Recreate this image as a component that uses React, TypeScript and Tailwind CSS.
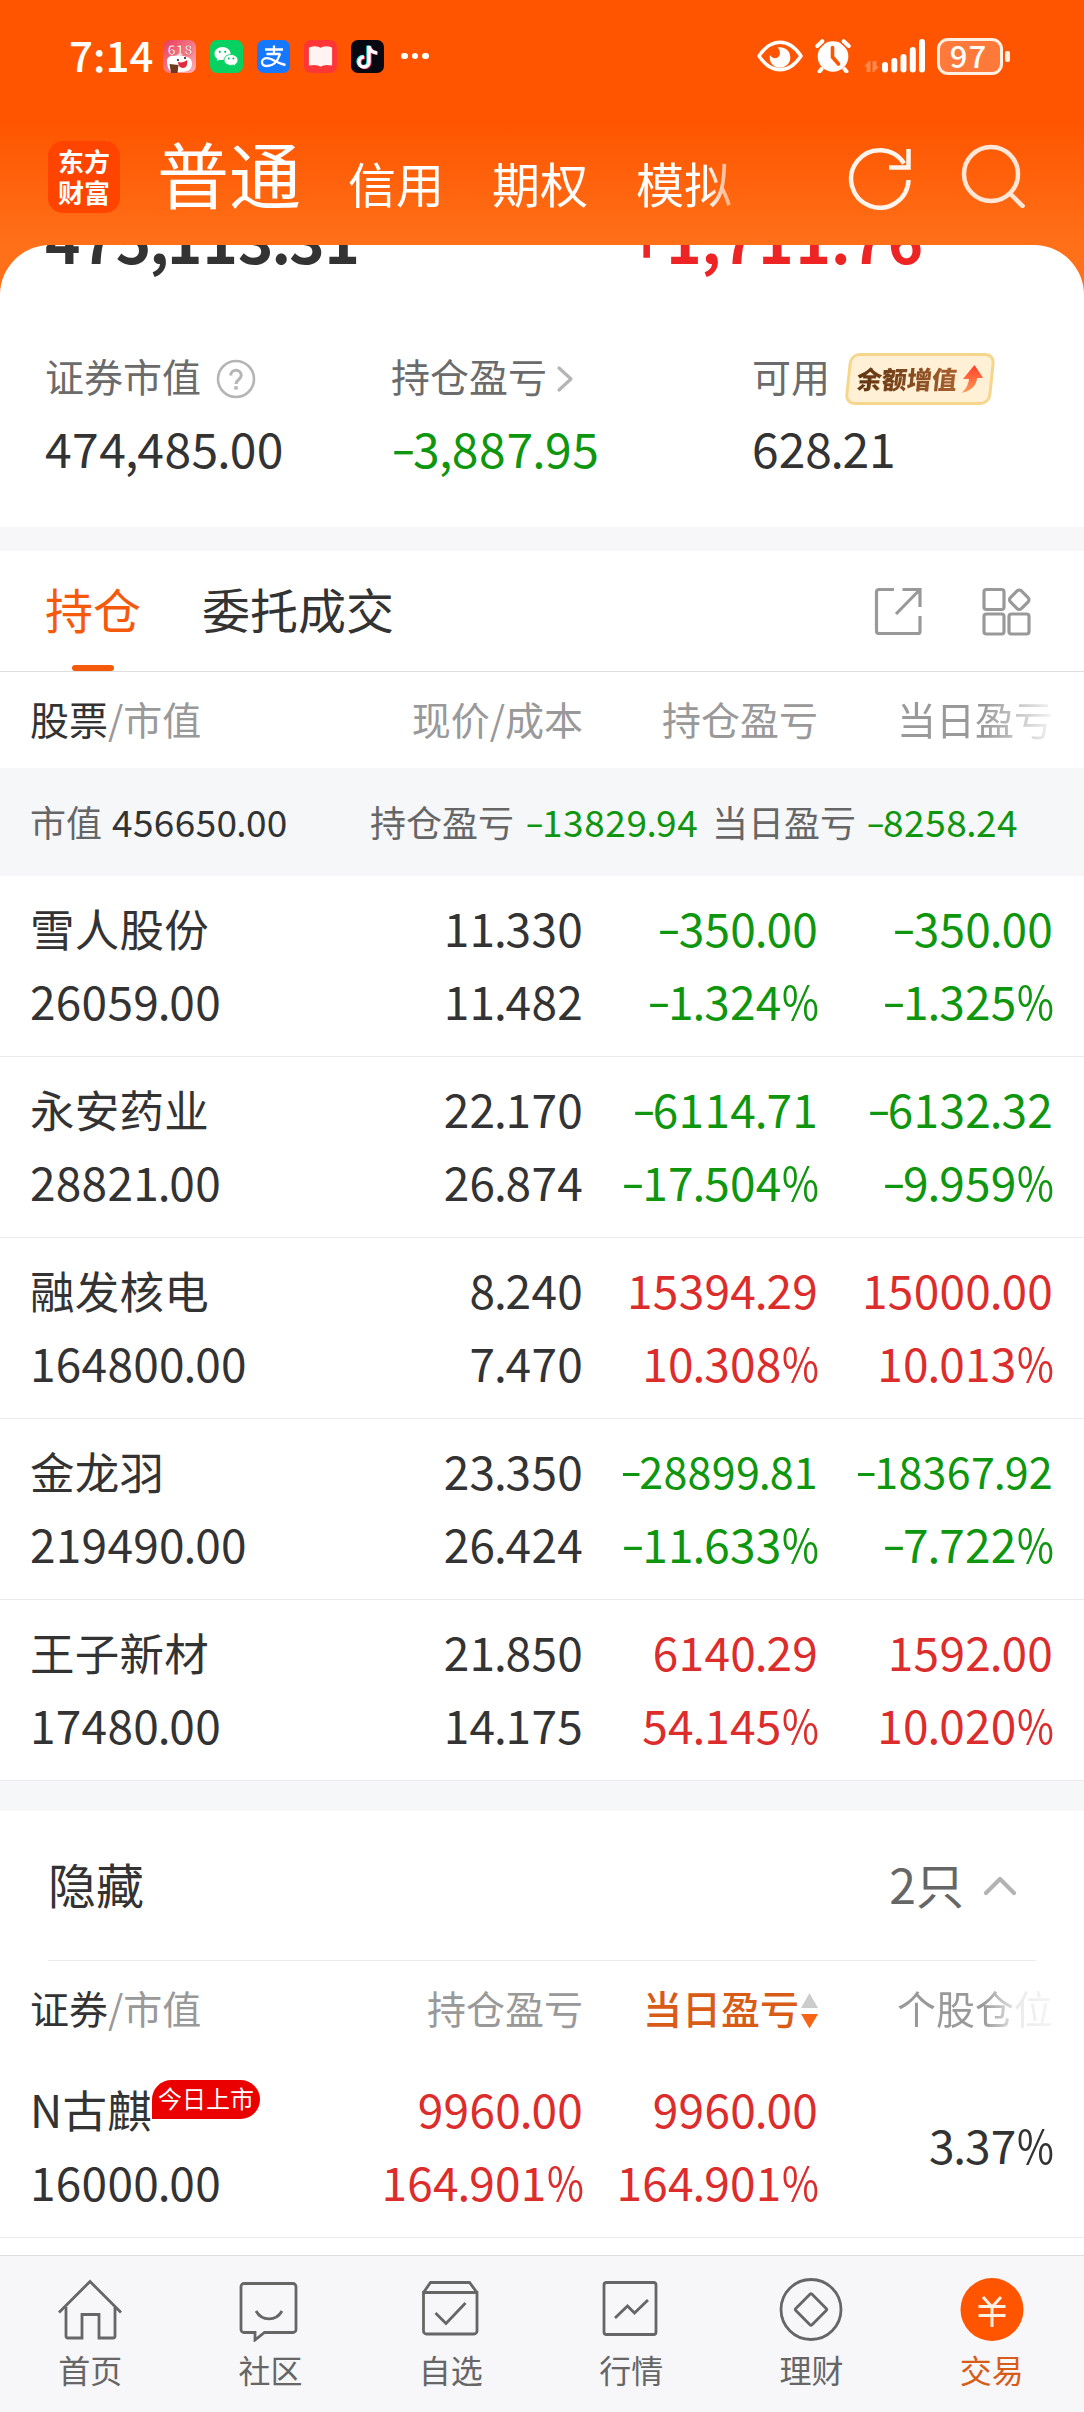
import React from "react";

type Tone = "dark" | "green" | "red";

const toneClass: Record<Tone, string> = {
  dark: "text-[#333333]",
  green: "text-[#0f960f]",
  red: "text-[#dc2c2c]",
};

/* Number with tuned widths for sign, separators and percent */
function Num({ value }: { value: string }) {
  return (
    <span className="whitespace-nowrap">
      {value.split(/([-.,%])/).filter(Boolean).map((part, i) => {
        if (part === "-")
          return <span key={i} className="inline-block w-[0.46em] origin-left -translate-y-[0.04em] scale-x-[1.5]">-</span>;
        if (part === "." || part === ",")
          return <span key={i} className="-mx-[0.03em]">{part}</span>;
        if (part === "%")
          return <span key={i} className="inline-block w-[0.79em] origin-left scale-x-[0.87]">%</span>;
        return <React.Fragment key={i}>{part}</React.Fragment>;
      })}
    </span>
  );
}

function StatusBar() {
  return (
    <div className="flex h-[112px] items-center pl-[69px] pr-[74px] text-white">
      <span className="w-[94px] text-[42px] font-medium leading-[60px] -mt-[4px]">7:14</span>
      <div className="flex items-center gap-[14px]">
        <svg width="33" height="33" viewBox="0 0 33 33">
          <defs>
            <linearGradient id="mall" x1="0" y1="0" x2="1" y2="1">
              <stop offset="0" stopColor="#e93a58" />
              <stop offset="1" stopColor="#ffb3b5" />
            </linearGradient>
          </defs>
          <rect width="33" height="33" rx="7" fill="url(#mall)" />
          <text x="17" y="15" textAnchor="middle" fontSize="14" fontWeight="700" fill="#fff" stroke="#d8304c" strokeWidth="0.5">618</text>
          <path d="M4 21c0-4 4-6 7-5 3-1 9-1 12 1 4 0 6 3 6 7 0 5-4 8-11 8H9c-4-2-5-7-5-11z" fill="#fff" />
          <path d="M15 22c3 1 7 0 9-2 1 5-1 8-4 8s-5-3-5-6z" fill="#e02a3c" />
          <circle cx="15" cy="20" r="1.1" fill="#222" />
          <circle cx="22" cy="18" r="1.1" fill="#222" />
          <path d="M6.500 24l9 1-1 8H8z" fill="#6d3a1d" />
        </svg>
        <svg width="33" height="33" viewBox="0 0 33 33">
          <rect width="33" height="33" rx="7" fill="#07d160" />
          <path d="M12.500 7C8 7 4.500 10 4.500 13.700c0 2.100 1.100 4 3 5.200L6.800 21l2.800-1.300c1 .3 2 .4 3 .4 4.400 0 8-2.900 8-6.500S17 7 12.500 7z" fill="#fff" />
          <path d="M21 14.500c-4 0-7 2.500-7 5.500s3 5.400 7 5.400c.8 0 1.700-.1 2.400-.3l2.500 1.200-.6-2c1.700-1 2.700-2.600 2.700-4.300 0-3-3-5.500-7-5.500z" fill="#fff" stroke="#07d160" strokeWidth="0.900" />
          <g fill="#07c35a">
            <circle cx="9.800" cy="11.800" r="1.100" />
            <circle cx="15.200" cy="11.800" r="1.100" />
            <circle cx="18.800" cy="18.500" r="1" />
            <circle cx="23.400" cy="18.500" r="1" />
          </g>
        </svg>
        <svg width="33" height="33" viewBox="0 0 33 33">
          <rect width="33" height="33" rx="7" fill="#1677ff" />
          <g fill="none" stroke="#fff" strokeWidth="2.300">
            <path d="M8 9.500h18M17 5.500v8M9.500 14h14" />
            <path d="M23 14c-2 6-6 12-12.500 12-4 0-5.500-2-5.500-3.800 0-2.200 2-4 5-4 5.500 0 9 5 18.500 6.800" />
          </g>
        </svg>
        <svg width="33" height="33" viewBox="0 0 33 33">
          <rect width="33" height="33" rx="7" fill="#ff3638" />
          <path d="M5.500 8c4-1.500 8-1.500 11 .4 3-1.900 7-1.900 11-.4v17c-4-1-8-1-11 1-3-2-7-2-11-1z" fill="#fff4f2" stroke="#fff4f2" strokeWidth="1.200" strokeLinejoin="round" />
        </svg>
        <svg width="33" height="33" viewBox="0 0 33 33">
          <rect width="33" height="33" rx="7" fill="#080812" />
          <g fill="none" strokeWidth="3.300">
            <path d="M17 5.500v16a5 5 0 1 1-5-5M17 5.500c.5 4 3.500 6.500 8 7" stroke="#25f4ee" />
            <path d="M19 6.500v16a5 5 0 1 1-5-5M19 6.500c.5 4 3.500 6.500 8 7" stroke="#fe2c55" />
            <path d="M18 6v16a5 5 0 1 1-5-5M18 6c.5 4 3.500 6.500 8 7" stroke="#fff" />
          </g>
        </svg>
        <div className="ml-[3px] flex gap-[4px]">
          <i className="size-[6.500px] rounded-full bg-white" />
          <i className="size-[6.500px] rounded-full bg-white" />
          <i className="size-[6.500px] rounded-full bg-white" />
        </div>
      </div>
      <div className="ml-auto flex items-center">
        <svg width="46" height="32" viewBox="0 0 46 32" className="mr-[12px]">
          <path d="M2 16C8 7 15 2.300 23 2.300S38 7 44 16c-6 9-13 13.700-21 13.700S8 25 2 16z" fill="none" stroke="#fff" strokeWidth="3.400" strokeLinejoin="round" />
          <path d="M20.500 7.500A10.300 10.300 0 1 1 13 15c1.500 3 4.800 4 7.500 2.500 3-1.800 3.500-6.500 0-10z" fill="#fff" />
        </svg>
        <svg width="36" height="34" viewBox="0 0 36 34" className="mr-[13px]">
          <circle cx="18" cy="17.500" r="15.300" fill="#fff" />
          <path d="M6.500 30L4.500 32.500M29.500 30l2 2.500" stroke="#fff" strokeWidth="4" strokeLinecap="round" />
          <path d="M2.300 7L7.300 2.200M33.700 7L28.700 2.200" stroke="#ff5500" strokeWidth="7" strokeLinecap="round" />
          <path d="M2.300 7L7.300 2.200M33.700 7L28.700 2.200" stroke="#fff" strokeWidth="4" strokeLinecap="round" />
          <path d="M17.500 8.500v9.500l6 7" fill="none" stroke="#ff5500" strokeWidth="3.600" strokeLinecap="round" />
        </svg>
        <svg width="61" height="34" viewBox="0 0 61 34" className="mr-[12px]">
          <path d="M0 27.500L5 22h1.500v11h-4v-5.500zM8.500 22h4v5.500H15L10 33H8.500z" fill="#fff" fillOpacity="0.3" />
          <g fill="#fff">
            <rect x="18" y="23" width="6" height="10.500" rx="3" />
            <rect x="27.300" y="19" width="6" height="14.500" rx="3" />
            <rect x="36.500" y="15" width="6" height="18.500" rx="3" />
            <rect x="45.800" y="8" width="6" height="25.500" rx="3" />
            <rect x="55" y="0" width="6" height="33.500" rx="3" />
          </g>
        </svg>
        <div className="flex h-[37px] w-[66px] items-center justify-center rounded-[11px] border-[3px] border-[#fff0e4] bg-[#ff7a3a] text-[31px] font-medium leading-[31px] tracking-[1px]">
          <span className="-mt-[4px] -ml-[3px]">97</span>
        </div>
        <i className="ml-[2px] h-[11px] w-[5px] rounded-[2px] bg-[#fff0e4]" />
      </div>
    </div>
  );
}

function TopNav() {
  return (
    <div className="flex h-[133px] pl-[48px] text-white">
      <div className="mt-[29px] flex size-[72px] flex-col items-center justify-center rounded-[15px] bg-[#ff4400] text-[26px] font-bold leading-[31px]">
        <span className="-mt-[3px]">东方</span>
        <span>财富</span>
      </div>
      <div className="ml-[37px] flex w-[590px] shrink-0 items-baseline gap-[48px] whitespace-nowrap text-[48px] leading-[72px] [mask-image:linear-gradient(to_right,black_550px,transparent_595px)]">
        <span className="mt-[10px] w-[143px] shrink-0 text-[72px] leading-[100px]">普通</span>
        <span>信用</span>
        <span>期权</span>
        <span>模拟</span>
      </div>
      <svg width="64" height="64" viewBox="0 0 64 64" className="ml-[101px] mt-[34px]" fill="none" stroke="#fff5ec" strokeWidth="4.500">
        <path d="M60.500 34A28.700 28.700 0 1 1 56 17.500" />
        <path d="M60.500 3v18.500H41" />
      </svg>
      <svg width="64" height="64" viewBox="0 0 64 64" className="ml-[49px] mt-[32px]" fill="none" stroke="#ffe6d6" strokeWidth="4.500">
        <circle cx="30" cy="30" r="27" />
        <path d="M49 49.500l14 14" />
      </svg>
    </div>
  );
}

function Summary() {
  return (
    <section className="flow-root h-[282px]">
      <div className="-mt-[27px] flex h-[40px] text-[60px] font-bold leading-[40px]">
        <div className="w-[629px] shrink-0 pl-[45px] text-[#333333]"><Num value="475,113.31" /></div>
        <div className="tracking-[0.03em] text-[#ee2424]"><Num value="+1,711.76" /></div>
      </div>
      <div className="mt-[87px] flex text-[39px] leading-[60px] text-[#6b6b6b]">
        <div className="w-[346px] shrink-0 ml-[45px]">
          <div className="flex items-center">
            证券市值
            <svg width="40" height="40" viewBox="0 0 40 40" className="ml-[15px] mt-[8px]" fill="none" stroke="#b5b5b5" strokeWidth="2.600">
              <circle cx="20" cy="20" r="18" />
              <path d="M14.800 16.500c0-7 10.400-7 10.400 0 0 4-5.200 4-5.200 8.500" strokeWidth="3" />
              <path d="M20 27.200v3.300" strokeWidth="3.600" />
            </svg>
          </div>
          <div className="mt-[12px] text-[48px] tracking-[0.01em] text-[#333333]"><Num value="474,485.00" /></div>
        </div>
        <div className="w-[361px] shrink-0">
          <div className="flex items-center">
            持仓盈亏
            <svg width="18" height="28" viewBox="0 0 18 28" className="ml-[9px] mt-[7px]" fill="none" stroke="#b5b5b5" strokeWidth="3.200" strokeLinecap="round" strokeLinejoin="round">
              <path d="M3 3l12 11L3 25" />
            </svg>
          </div>
          <div className="mt-[12px] text-[48px] tracking-[0.015em] text-[#0f960f]"><Num value="-3,887.95" /></div>
        </div>
        <div>
          <div className="flex h-[60px] items-center">
            可用
            <div className="ml-[17px] mt-[8px] flex h-[52px] w-[146px] -skew-x-6 items-center justify-center rounded-[10px] border-[3px] border-[#f5d68c] bg-[#fff0d6] pl-[1px]">
              <span className="bg-gradient-to-r from-[#5f3512] to-[#a8602f] bg-clip-text text-[25px] font-black leading-[36px] text-transparent -mt-[3px]">余额增值</span>
              <svg width="23" height="30" viewBox="0 0 23 30" className="ml-[4px]">
                <defs>
                  <linearGradient id="rise" x1="0" y1="0" x2="0" y2="1">
                    <stop offset="0" stopColor="#ff4028" />
                    <stop offset="1" stopColor="#ff9a56" />
                  </linearGradient>
                </defs>
                <path d="M12 1l10 13h-6c0 8-5 13-14 15 4-4 6-8 6-14H2z" fill="url(#rise)" />
              </svg>
            </div>
          </div>
          <div className="mt-[12px] text-[48px] text-[#333333]"><Num value="628.21" /></div>
        </div>
      </div>
    </section>
  );
}

function Tabs() {
  return (
    <div className="flex h-[121px] items-start border-b border-[#dedede] pl-[45px] pr-[52px] text-[48px] leading-[72px] text-[#333333]">
      <div className="flex flex-col items-center pt-[21px] text-[#f55a0c]">
        持仓
        <i className="mt-[21px] h-[6px] w-[42px] rounded-full bg-[#f55a0c]" />
      </div>
      <span className="ml-[61px] pt-[21px]">委托成交</span>
      <svg width="48" height="48" viewBox="0 0 48 48" className="ml-auto mt-[36px]" fill="none" stroke="#999999" strokeWidth="3.200">
        <path d="M20 2.500H5a2.500 2.500 0 0 0-2.500 2.500v39A2.500 2.500 0 0 0 5 46.500h39a2 2 0 0 0 2-2V29" />
        <path d="M28.500 2.500H46V20M45 3.500L22 27" />
      </svg>
      <svg width="51" height="50" viewBox="0 0 51 50" className="ml-[59px] mt-[35px]" fill="none" stroke="#999999" strokeWidth="3.200">
        <rect x="3" y="3.500" width="20" height="20" rx="2.500" />
        <rect x="3" y="28" width="20" height="20" rx="2.500" />
        <rect x="28" y="28" width="20" height="20" rx="2.500" />
        <rect x="30.500" y="6" width="15.500" height="15.500" rx="3" transform="rotate(45 38.250 13.750)" />
      </svg>
    </div>
  );
}

const gridCols = "grid grid-cols-[308px_245px_235px_235px] pl-[30px]";

type Holding = { name: string; value: string; price: string; cost: string; pl: string; plPct: string; day: string; dayPct: string; tone: Tone };

const holdings: Holding[] = [
  { name: "雪人股份", value: "26059.00", price: "11.330", cost: "11.482", pl: "-350.00", plPct: "-1.324%", day: "-350.00", dayPct: "-1.325%", tone: "green" },
  { name: "永安药业", value: "28821.00", price: "22.170", cost: "26.874", pl: "-6114.71", plPct: "-17.504%", day: "-6132.32", dayPct: "-9.959%", tone: "green" },
  { name: "融发核电", value: "164800.00", price: "8.240", cost: "7.470", pl: "15394.29", plPct: "10.308%", day: "15000.00", dayPct: "10.013%", tone: "red" },
  { name: "金龙羽", value: "219490.00", price: "23.350", cost: "26.424", pl: "-28899.81", plPct: "-11.633%", day: "-18367.92", dayPct: "-7.722%", tone: "green" },
  { name: "王子新材", value: "17480.00", price: "21.850", cost: "14.175", pl: "6140.29", plPct: "54.145%", day: "1592.00", dayPct: "10.020%", tone: "red" },
];

/* Amounts of nine characters or more are set smaller to fit the column */
function Pair({ a, b, tone }: { a: string; b: string; tone: Tone }) {
  return (
    <div className={`flex flex-col items-end ${toneClass[tone]}`}>
      <span className={a.length > 8 ? "text-[43px]" : ""}><Num value={a} /></span>
      <Num value={b} />
    </div>
  );
}

const rowClass = "h-[181px] border-b border-[#ebebeb] pt-[15px] text-[46px] leading-[73px] tracking-[0.006em] text-[#333333]";
const headClass = "h-[96px] pt-[16px] text-[39px] leading-[60px] text-[#999999]";

function HoldingsTable() {
  return (
    <section>
      <div className={`${gridCols} ${headClass}`}>
        <div><span className="text-[#333333]">股票</span>/市值</div>
        <div className="text-right">现价/成本</div>
        <div className="text-right">持仓盈亏</div>
        <div className="text-right [mask-image:linear-gradient(to_right,black_165px,rgba(0,0,0,0.1)_235px)]">当日盈亏</div>
      </div>
      <div className="flex h-[108px] items-center bg-[#f6f7f9] pl-[30px] pb-[3px] text-[36px] leading-[54px] text-[#666666]">
        <div className="flex w-[340px] gap-[10px]">市值<span className="text-[37px] tracking-[0.01em] text-[#333333]"><Num value="456650.00" /></span></div>
        <div className="flex w-[342px] gap-[11px]">持仓盈亏<span className="text-[37px] tracking-[0.015em] text-[#0f960f]"><Num value="-13829.94" /></span></div>
        <div className="flex gap-[10px]">当日盈亏<span className="text-[37px] tracking-[0.015em] text-[#0f960f]"><Num value="-8258.24" /></span></div>
      </div>
      {holdings.map((h) => (
        <div key={h.name} className={`${gridCols} ${rowClass}`}>
          <div className="flex flex-col">
            <span className="text-[44.500px]">{h.name}</span>
            <Num value={h.value} />
          </div>
          <Pair a={h.price} b={h.cost} tone="dark" />
          <Pair a={h.pl} b={h.plPct} tone={h.tone} />
          <Pair a={h.day} b={h.dayPct} tone={h.tone} />
        </div>
      ))}
    </section>
  );
}

function HiddenSection() {
  return (
    <section>
      <div className="mx-[48px] flex h-[150px] items-center border-b border-[#ebebeb] pr-[18px] text-[48px] leading-[72px] text-[#333333]">
        <span className="-mt-[6px]">隐藏</span>
        <span className="-mt-[6px] ml-auto text-[#666666]">2只</span>
        <svg width="36" height="24" viewBox="0 0 36 24" className="ml-[18px]" fill="none" stroke="#b3b3b3" strokeWidth="4.200" strokeLinecap="round" strokeLinejoin="round">
          <path d="M4 19L18 5l14 14" />
        </svg>
      </div>
      <div className={`${gridCols} ${headClass}`}>
        <div><span className="text-[#333333]">证券</span>/市值</div>
        <div className="text-right">持仓盈亏</div>
        <div className="flex justify-end font-medium text-[#d85c17]">
          当日盈亏
          <svg width="17" height="36" viewBox="0 0 17 36" className="ml-[2px] mt-[16px]">
            <path d="M8.500 0L17 15H0z" fill="#cccccc" />
            <path d="M8.500 35.500L17 21H0z" fill="#f76415" />
          </svg>
        </div>
        <div className="text-right [mask-image:linear-gradient(to_right,black_165px,rgba(0,0,0,0.2)_200px,rgba(0,0,0,0.1)_235px)]">个股仓位</div>
      </div>
      <div className={`${gridCols} ${rowClass}`}>
        <div className="flex flex-col">
          <div className="flex h-[73px] items-start">
            <span className="text-[44.500px]">N古麒</span>
            <span className="mt-[8px] h-[39px] w-[108px] shrink-0 rounded-[20px] rounded-bl-none bg-[#eb0000] text-center text-[24px] leading-[36px] tracking-normal text-white">今日上市</span>
          </div>
          <Num value="16000.00" />
        </div>
        <Pair a="9960.00" b="164.901%" tone="red" />
        <Pair a="9960.00" b="164.901%" tone="red" />
        <div className="pt-[36px] text-right"><Num value="3.37%" /></div>
      </div>
    </section>
  );
}

const navItems = [
  {
    label: "首页",
    icon: (
      <>
        <path d="M1 34.500L32 3.500l31 31" />
        <path d="M8 29v29a2 2 0 0 0 2 2h14V36.500h17V60h14a2 2 0 0 0 2-2V29" />
      </>
    ),
  },
  {
    label: "社区",
    icon: (
      <>
        <path d="M6 5.500h49a3 3 0 0 1 3 3v43a3 3 0 0 1-3 3H26.500l-9.500 7.500v-7.500H6a3 3 0 0 1-3-3v-43a3 3 0 0 1 3-3z" />
        <path d="M18 33c6 10.500 20 10.500 26 0" />
      </>
    ),
  },
  {
    label: "自选",
    icon: (
      <>
        <path d="M4.500 14.500L11.500 4.500h39l7.500 10M4.500 14.500H58V53a3 3 0 0 1-3 3H7.500a3 3 0 0 1-3-3z" />
        <path d="M16.500 35L27 45.500L46.500 25" />
      </>
    ),
  },
  {
    label: "行情",
    icon: (
      <>
        <rect x="5" y="4.500" width="52" height="52" rx="2.500" />
        <path d="M16 40L28.500 28l7 7L49 22" />
      </>
    ),
  },
  {
    label: "理财",
    icon: (
      <>
        <circle cx="32" cy="31.500" r="30" />
        <rect x="20.500" y="20" width="23" height="23" rx="1.500" transform="rotate(45 32 31.500)" />
      </>
    ),
  },
];

function BottomNav() {
  return (
    <nav className="grid h-[157px] grid-cols-6 border-t border-[#dedede] bg-[#f7f7fa] pt-[22px] pr-[2px] text-[32px] leading-[48px] text-[#666666]">
      {navItems.map((n) => (
        <div key={n.label} className="flex flex-col items-center gap-[3px]">
          <svg width="64" height="64" viewBox="0 0 64 64" fill="none" stroke="#666666" strokeWidth="2.800">{n.icon}</svg>
          {n.label}
        </div>
      ))}
      <div className="flex flex-col items-center gap-[3px] text-[#d85c17]">
        <svg width="64" height="64" viewBox="0 0 64 64" fill="none" stroke="#fff0e4" strokeWidth="3">
          <circle cx="32" cy="31.500" r="31.500" fill="#ff5500" stroke="none" />
          <path d="M23 19l9 10 9-10M18.500 28.500h27M18.500 37.500h27M32 28v21" />
        </svg>
        交易
      </div>
    </nav>
  );
}

export default function App() {
  return (
    <div className="flex h-[2412px] w-[1084px] flex-col overflow-hidden bg-white font-['Noto_Sans_CJK_SC',sans-serif]">
      <div className="bg-[linear-gradient(to_bottom,#ff5500_0px,#ff5500_122px,#ff7019_245px,#ff7019_300px)]">
        <StatusBar />
        <TopNav />
        <div className="overflow-hidden rounded-t-[50px] bg-white">
          <Summary />
        </div>
      </div>
      <div className="h-[24px] shrink-0 bg-[#f7f7fa]" />
      <Tabs />
      <HoldingsTable />
      <div className="h-[30px] shrink-0 bg-[#f6f7f9]" />
      <HiddenSection />
      <div className="mt-auto"><BottomNav /></div>
    </div>
  );
}
